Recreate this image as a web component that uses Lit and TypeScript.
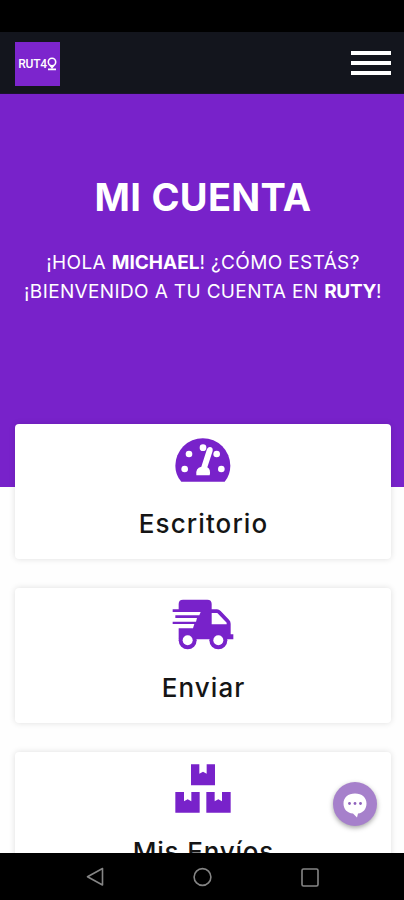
import { LitElement, html, css, svg } from "lit";
import { customElement, property } from "lit/decorators.js";

const gauge = svg`
  <svg viewBox="-6 27 510 210" width="170" height="70">
    <path fill="#7822ca" d="M184 200Q166 180 166 152A82 82 0 0 1 331 152Q331 180 314 200Z"/>
    <g fill="#fff">
      <circle cx="194" cy="162" r="10"/><circle cx="207" cy="117" r="10"/>
      <circle cx="249" cy="98" r="10"/><circle cx="290" cy="117" r="10"/>
      <circle cx="304" cy="162" r="10"/>
      <path d="M229 181Q226 158 244 155L261 102Q266 93 274 97Q280 100 278 108L262 157Q273 163 269 181Z"/>
    </g>
  </svg>`;

const truck = svg`
  <svg viewBox="-6 24 510 210" width="170" height="70">
    <g fill="#7822ca">
      <path d="M176 88V72Q176 59 189 59H262Q275 59 275 72V88H291Q297 88 302 93L327 119Q332 124 332 131V163H340V178H176V145H219L223 132H158V125H228L231 114H166V106H238L242 96H158V88Z"/>
      <circle cx="203" cy="181" r="27"/><circle cx="295" cy="181" r="27"/>
    </g>
    <g fill="#fff">
      <circle cx="203" cy="181" r="15"/><circle cx="295" cy="181" r="15"/>
      <path d="M275 99H292L320 128V133H275Z"/>
    </g>
  </svg>`;

const boxes = svg`
  <svg viewBox="-6 21 510 210" width="170" height="70">
    <g fill="#7822ca">
      <path d="M213 58H238V86L249 80L260 86V58H285V121H213Z"/>
      <path d="M166 141H192V169L203 163L214 169V141H239V203H166Z"/>
      <path d="M259 141H284V169L295 163L306 169V141H332V203H259Z"/>
    </g>
  </svg>`;

@customElement("menu-card")
class MenuCard extends LitElement {
  @property() label = "";
  @property({ attribute: false }) icon: unknown;
  @property({ type: Number }) spacing = 0;

  static styles = css`
    :host {
      display: flex;
      flex-direction: column;
      align-items: center;
      flex: none;
      height: 135px;
      border-radius: 4px;
      background: #fff;
      box-shadow: 0 0 6px rgba(0, 0, 0, 0.13);
    }
    svg { display: block; }
    .label {
      margin-top: 12px;
      font-size: 26px;
      font-weight: 450;
      line-height: 35px;
      color: #151515;
      white-space: nowrap;
    }
  `;

  render() {
    return html`${this.icon}
      <div class="label" style="letter-spacing:${this.spacing}px;margin-right:${-this.spacing}px">${this.label}</div>`;
  }
}

@customElement("app-root")
class AppRoot extends LitElement {
  static styles = css`
    :host {
      display: flex;
      flex-direction: column;
      position: relative;
      height: 900px;
      overflow: hidden;
      background: #fefefe;
      font-family: Inter, "Liberation Sans", sans-serif;
    }
    svg { display: block; }
    .status { flex: none; height: 32px; background: #000; }
    header {
      flex: none;
      box-sizing: border-box;
      height: 62px;
      padding: 0 13px 0 15px;
      display: flex;
      align-items: center;
      justify-content: space-between;
      background: #13151d;
      border-bottom: 1px solid #1c1230;
    }
    .logo {
      width: 45px;
      height: 44px;
      display: flex;
      align-items: center;
      justify-content: center;
      margin-top: 3px;
      background: #7c25cd;
      color: #fff;
    }
    .word {
      font: 500 12px/14px Roboto, sans-serif;
      letter-spacing: -0.3px;
    }
    .burger { display: flex; flex-direction: column; gap: 6px; }
    .burger i { width: 40px; height: 4px; background: #fff; }
    .hero {
      flex: none;
      box-sizing: border-box;
      height: 393px;
      padding-top: 79px;
      text-align: center;
      color: #fff;
      background: #7822ca;
    }
    h1 {
      margin: 0 -2px 0 0;
      font-size: 38px;
      line-height: 48px;
      font-weight: 650;
      letter-spacing: 0.3px;
      word-spacing: 1px;
      white-space: nowrap;
    }
    p {
      margin: 27px 0 0;
      padding-left: 2px;
      font-size: 19px;
      line-height: 29px;
      letter-spacing: 0.36px;
      white-space: nowrap;
    }
    b { font-weight: 700; letter-spacing: 0; }
    .l2 b { letter-spacing: -0.3px; }
    .l1, .l2 { display: block; }
    .cards {
      flex: 1;
      min-height: 0;
      margin: -63px 13px 0 15px;
      display: flex;
      flex-direction: column;
      gap: 29px;
    }
    nav {
      flex: none;
      height: 47px;
      background: #000;
      position: relative;
    }
    .chat {
      position: absolute;
      left: 333px;
      top: 782px;
      width: 44px;
      height: 44px;
      border-radius: 50%;
      background: #a680cb;
      box-shadow: 0 2px 5px rgba(0, 0, 0, 0.35);
    }
  `;

  render() {
    return html`
      <div class="status"></div>
      <header>
        <div class="logo">
          <span class="word">RUT4</span>
          <svg width="10" height="14" viewBox="0 0 10 14" fill="none" stroke="#fff" stroke-width="1.6">
            <circle cx="5" cy="5" r="3.7"/><path d="M3 8.3L5 10.5L7 8.3M1 12.4H9"/>
          </svg>
        </div>
        <div class="burger"><i></i><i></i><i></i></div>
      </header>
      <section class="hero">
        <h1>MI CUENTA</h1>
        <p>
          <span class="l1">¡HOLA <b>MICHAEL</b>! ¿CÓMO ESTÁS?</span>
          <span class="l2">¡BIENVENIDO A TU CUENTA EN <b>RUTY</b>!</span>
        </p>
      </section>
      <main class="cards">
        <menu-card label="Escritorio" .icon=${gauge} .spacing=${1.1}></menu-card>
        <menu-card label="Enviar" .icon=${truck} .spacing=${1.1}></menu-card>
        <menu-card label="Mis Envíos" .icon=${boxes} .spacing=${0.8}></menu-card>
      </main>
      <nav>
        <svg width="404" height="47" viewBox="0 0 404 47" fill="none" stroke="#858585" stroke-width="1.6" stroke-linejoin="round">
          <path d="M102.5 15.5V32L87.5 23.7Z"/>
          <circle cx="202.5" cy="24" r="8.4"/>
          <rect x="302" y="16" width="16" height="17" rx="1.5"/>
        </svg>
      </nav>
      <div class="chat">
        <svg width="44" height="44" viewBox="0 0 44 44" fill="#fff">
          <path d="M22 11.5C29 11.5 33.5 15.5 33.5 21.5C33.5 27 30 31 25 31.5L24 35.5L20 31.5C14 31 10.5 27 10.5 21.5C10.5 15.5 15 11.5 22 11.5Z"/>
          <g fill="#8f62bd"><circle cx="16.5" cy="21.5" r="1.4"/><circle cx="22" cy="21.5" r="1.4"/><circle cx="27.5" cy="21.5" r="1.4"/></g>
        </svg>
      </div>
    `;
  }
}
